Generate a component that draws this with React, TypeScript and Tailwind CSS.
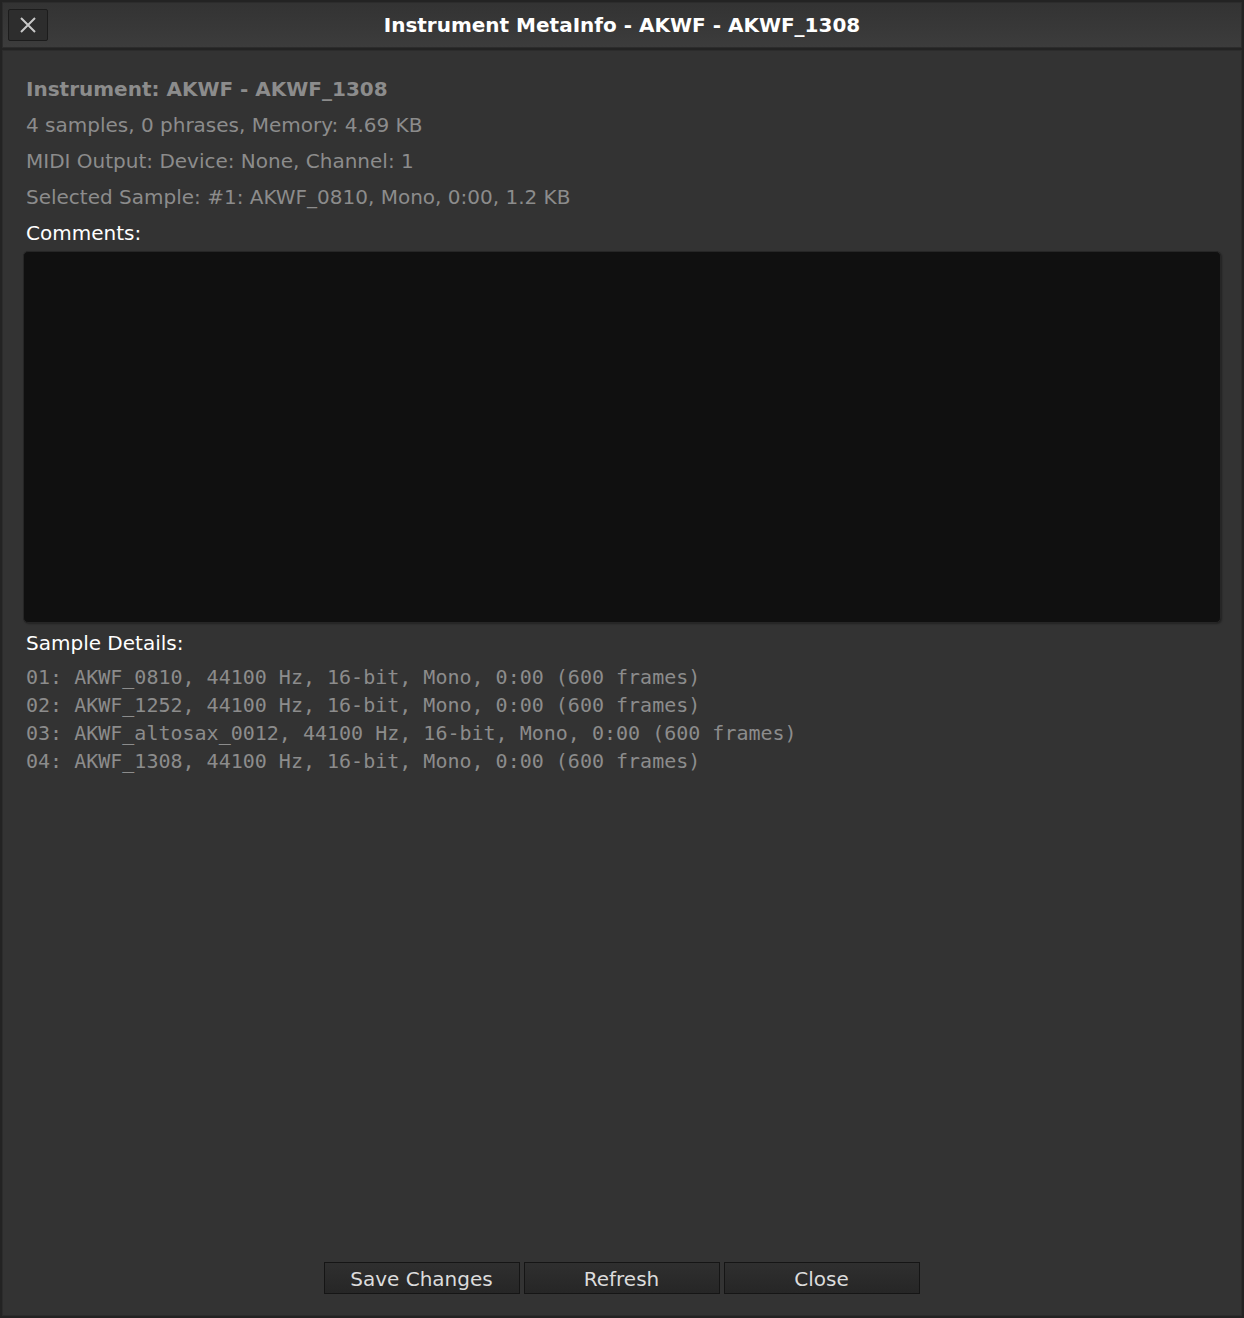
import React from "react";

const sans = { fontFamily: '"DejaVu Sans", Verdana, sans-serif' };
const mono = { fontFamily: '"DejaVu Sans Mono", monospace' };

export default function App() {
  const samples = [
    "01: AKWF_0810, 44100 Hz, 16-bit, Mono, 0:00 (600 frames)",
    "02: AKWF_1252, 44100 Hz, 16-bit, Mono, 0:00 (600 frames)",
    "03: AKWF_altosax_0012, 44100 Hz, 16-bit, Mono, 0:00 (600 frames)",
    "04: AKWF_1308, 44100 Hz, 16-bit, Mono, 0:00 (600 frames)",
  ];
  return (
    <div
      className="w-[1244px] h-[1318px] bg-[#232323] flex flex-col overflow-hidden"
      style={sans}
    >
      {/* Title bar */}
      <div className="h-[46px] mx-[2px] mt-[2px] border border-[#2c2c2c] bg-gradient-to-b from-[#333333] to-[#3c3c3c] relative flex items-center justify-center shrink-0">
        <button className="absolute left-[5px] top-[6px] w-[40px] h-[32px] bg-[#2d2d2d] border border-[#1c1c1c] rounded-[2px] flex items-center justify-center">
          <svg width="18" height="18" viewBox="0 0 18 18">
            <path d="M2 2 L16 16 M16 2 L2 16" stroke="#c8c8c8" strokeWidth="2" />
          </svg>
        </button>
        <div className="text-white font-bold text-[20px] leading-none">
          Instrument MetaInfo - AKWF - AKWF_1308
        </div>
      </div>
      {/* Content */}
      <div className="flex-1 mt-[2px] mx-[2px] mb-[2px] bg-[#333333] border border-[#2c2c2c] flex flex-col px-[23px] pt-[20px] pb-[21px]">
        <div className="flex flex-col text-[20px] leading-[36px] text-[#8c8c8c]">
          <div className="font-bold">Instrument: AKWF - AKWF_1308</div>
          <div>4 samples, 0 phrases, Memory: 4.69 KB</div>
          <div>MIDI Output: Device: None, Channel: 1</div>
          <div>Selected Sample: #1: AKWF_0810, Mono, 0:00, 1.2 KB</div>
          <div className="text-white">Comments:</div>
        </div>
        <div className="-mx-[3px] h-[372px] bg-[#101010] border border-[#262626] rounded-[5px] shadow-[1px_1px_2px_rgba(0,0,0,0.35)]" />
        <div className="mt-[8px] text-[20px] leading-[24px] text-white">Sample Details:</div>
        <div className="mt-[8px] flex flex-col text-[20px] leading-[28px] text-[#8c8c8c]" style={mono}>
          {samples.map((s) => (
            <div key={s} className="whitespace-pre">{s}</div>
          ))}
        </div>
        <div className="flex-1" />
        <div className="flex justify-center gap-[4px] -ml-[1px]">
          {["Save Changes", "Refresh", "Close"].map((b) => (
            <button
              key={b}
              className="w-[196px] h-[32px] bg-gradient-to-b from-[#2f2f2f] to-[#262626] border border-[#151515] text-[#dcdcdc] text-[20px] leading-none flex items-center justify-center pt-[2px]"
              style={sans}
            >
              {b}
            </button>
          ))}
        </div>
      </div>
    </div>
  );
}
